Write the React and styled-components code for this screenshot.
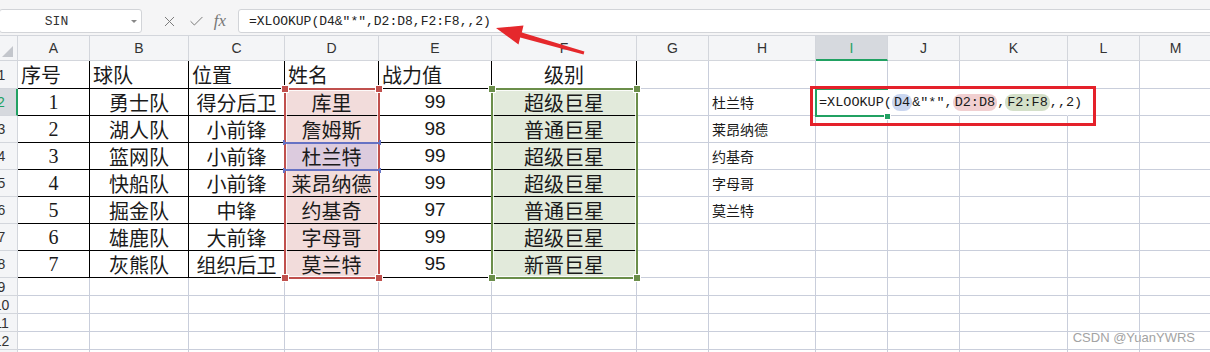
import styled, { createGlobalStyle } from 'styled-components';
import { X, Check } from 'lucide-react';

const GlobalStyle = createGlobalStyle`
  html, body { margin: 0; padding: 0; background: #fff; }
  body { font-family: "Liberation Sans", "Noto Sans CJK SC", sans-serif; }
`;

const COL_WIDTHS = [18, 72, 99, 96, 94, 113, 145, 72, 107, 72, 72, 108, 72, 72];
const ROW_HEIGHTS = [26, 28, 27, 27, 27, 27, 27, 27, 27, 18, 18, 18, 18, 18];
const LETTERS = ['A', 'B', 'C', 'D', 'E', 'F', 'G', 'H', 'I', 'J', 'K', 'L', 'M'];

const TABLE = [
  ['序号', '球队', '位置', '姓名', '战力值', '级别'],
  ['1', '勇士队', '得分后卫', '库里', '99', '超级巨星'],
  ['2', '湖人队', '小前锋', '詹姆斯', '98', '普通巨星'],
  ['3', '篮网队', '小前锋', '杜兰特', '99', '超级巨星'],
  ['4', '快船队', '小前锋', '莱昂纳德', '99', '超级巨星'],
  ['5', '掘金队', '中锋', '约基奇', '97', '普通巨星'],
  ['6', '雄鹿队', '大前锋', '字母哥', '99', '超级巨星'],
  ['7', '灰熊队', '组织后卫', '莫兰特', '95', '新晋巨星'],
];

const LOOKUPS = { 2: '杜兰特', 3: '莱昂纳德', 4: '约基奇', 5: '字母哥', 6: '莫兰特' };

const GREEN = '#21a162';
const GRID = '#c9cedb';
const HEAD_LINE = '#d3d6dc';

const Page = styled.div`
  position: relative;
  width: 1210px;
  height: 352px;
  overflow: hidden;
  background: #fff;
`;

const FormulaBar = styled.div`
  height: 35px;
  box-sizing: border-box;
  display: flex;
  align-items: flex-start;
  padding-top: 9px;
  background: #f5f5f6;
`;

const NameBox = styled.div`
  width: 143px;
  height: 24px;
  margin-left: -1px;
  box-sizing: border-box;
  display: flex;
  align-items: center;
  background: #fff;
  border: 1px solid #d2d4d8;
  border-radius: 3px;
  font: 13px "Liberation Mono", monospace;
  color: #333;
`;

const NameText = styled.span`
  flex: 1;
  text-align: center;
  padding-right: 18px;
`;

const Caret = styled.span`
  width: 0;
  height: 0;
  margin-right: 4px;
  border-left: 3px solid transparent;
  border-right: 3px solid transparent;
  border-top: 3px solid #888;
`;

const Tools = styled.div`
  display: flex;
  align-items: center;
  height: 24px;
  margin-left: 14px;
  color: #7a7a7a;
`;

const Tool = styled.span`
  width: ${p => p.$w}px;
  display: flex;
  justify-content: center;
  align-items: center;
`;

const Fx = styled.span`
  font: italic 17px "Liberation Serif", serif;
  color: #777;
`;

const FormulaInput = styled.div`
  flex: 1;
  height: 24px;
  margin-left: 8px;
  margin-right: -4px;
  box-sizing: border-box;
  display: flex;
  align-items: center;
  padding-left: 10px;
  background: #fff;
  border: 1px solid #d2d4d8;
  border-radius: 3px;
  font: 13px "Liberation Mono", monospace;
  color: #222;
  white-space: pre;
`;

const Sheet = styled.div`
  display: grid;
  grid-template-columns: ${COL_WIDTHS.map(w => `${w}px`).join(' ')};
  grid-template-rows: ${ROW_HEIGHTS.map(h => `${h}px`).join(' ')};
`;

const Placed = styled.div`
  grid-column: ${p => p.$c};
  grid-row: ${p => p.$r};
  box-sizing: border-box;
`;

const Corner = styled(Placed)`
  display: flex;
  align-items: flex-end;
  justify-content: flex-end;
  padding: 0 4px 3px 0;
  background: #f4f5f7;
  border-right: 1px solid ${HEAD_LINE};
  border-bottom: 1px solid ${HEAD_LINE};
  border-top: 1px solid ${HEAD_LINE};
  &::after {
    content: '';
    width: 0;
    height: 0;
    border-left: 11px solid transparent;
    border-bottom: 11px solid #c3c6cc;
  }
`;

const ColHead = styled(Placed)`
  display: flex;
  align-items: center;
  justify-content: center;
  background: ${p => (p.$active ? '#d6d9de' : '#f4f5f7')};
  color: ${p => (p.$active ? GREEN : '#333')};
  border-top: 1px solid ${HEAD_LINE};
  border-right: 1px solid ${HEAD_LINE};
  border-bottom: ${p => (p.$active ? `2px solid ${GREEN}` : `1px solid ${HEAD_LINE}`)};
  font: 14px "Liberation Sans", sans-serif;
`;

const RowHead = styled(Placed)`
  display: flex;
  align-items: center;
  justify-content: center;
  padding-right: 14px;
  overflow: hidden;
  background: ${p => (p.$active ? '#d6d9de' : '#f4f5f7')};
  color: ${p => (p.$active ? GREEN : '#333')};
  border-right: ${p => (p.$active ? `2px solid ${GREEN}` : `1px solid ${HEAD_LINE}`)};
  border-bottom: 1px solid ${HEAD_LINE};
  font: 14px "Liberation Sans", sans-serif;
`;

const FONTS = {
  cjk: '20px "Noto Sans CJK SC", sans-serif',
  serif: '20px "Liberation Serif", serif',
  sans: '19px "Liberation Sans", sans-serif',
  small: '14px "Noto Sans CJK SC", sans-serif',
  mono: '13.5px "Liberation Mono", monospace',
};

const Cell = styled(Placed)`
  display: flex;
  align-items: center;
  justify-content: ${p => (p.$align === 'left' ? 'flex-start' : 'center')};
  padding-left: ${p => (p.$align === 'left' ? '3px' : '0')};
  white-space: nowrap;
  position: relative;
  z-index: ${p => (p.$over ? 2 : 0)};
  background: ${p => p.$fill || 'transparent'};
  border-right: 1px solid ${p => (p.$hideRight ? 'transparent' : p.$dark ? '#000' : GRID)};
  border-bottom: 1px solid ${p => (p.$dark ? '#000' : GRID)};
  font: ${p => FONTS[p.$font]};
  color: #1a1a1a;
`;

const Ref = styled.span`
  background: ${p => p.$bg};
  border-radius: 8px;
  padding: 1px 2px;
`;

const RangeBox = styled(Placed)`
  margin: -1px;
  position: relative;
  z-index: 3;
  pointer-events: none;
  border: 2px solid ${p => p.$color};
  box-shadow: inset 0 0 0 1px rgba(255, 255, 255, 0.85);
`;

const Handle = styled.span`
  position: absolute;
  width: 6px;
  height: 6px;
  background: ${p => p.$color};
  border: 1px solid #fff;
  ${p => (p.$top ? 'top: -5px;' : 'bottom: -5px;')}
  ${p => (p.$left ? 'left: -5px;' : 'right: -5px;')}
`;

const CellMark = styled(Placed)`
  margin: -1px -2px;
  position: relative;
  z-index: 4;
  pointer-events: none;
  border-top: 2px solid #6672c4;
  border-bottom: 2px solid #6672c4;
  &::before,
  &::after {
    content: '';
    position: absolute;
    top: -4px;
    bottom: -4px;
    width: 2px;
    background: linear-gradient(#6672c4 0 5px, transparent 5px calc(100% - 5px), #6672c4 calc(100% - 5px));
  }
  &::before { left: 0; }
  &::after { right: 0; }
`;

const ActiveCell = styled(Placed)`
  margin: -1px 0 -1px -1px;
  position: relative;
  z-index: 3;
  pointer-events: none;
  border: 2px solid ${GREEN};
  border-right: none;
`;

const FillHandle = styled.span`
  position: absolute;
  right: -3px;
  bottom: -5px;
  width: 5px;
  height: 5px;
  background: ${GREEN};
  border: 1px solid #fff;
`;

const Callout = styled.div`
  position: absolute;
  left: 810px;
  top: 86px;
  width: 286px;
  height: 40px;
  box-sizing: border-box;
  border: 3px solid #e4212a;
  z-index: 6;
  pointer-events: none;
`;

const Arrow = styled.svg`
  position: absolute;
  left: 490px;
  top: 20px;
  z-index: 6;
  overflow: visible;
`;

const Watermark = styled.div`
  position: absolute;
  right: 15px;
  bottom: 7px;
  z-index: 6;
  font: 13px "Liberation Sans", sans-serif;
  color: #a3a3a3;
  text-shadow: 0 0 1px #fff;
`;

const PINK = '#f2dcdb';
const LILAC = '#dccbde';
const SAGE = '#e2eadb';

function cellProps(r, ci) {
  const inTable = r <= 8 && ci <= 5;
  const props = { $dark: inTable, $align: 'center', $font: 'cjk' };
  let content = null;
  if (inTable) {
    content = TABLE[r - 1][ci];
    if (r === 1) props.$align = ci === 5 ? 'center' : 'left';
    else if (ci === 0) props.$font = 'serif';
    else if (ci === 4) props.$font = 'sans';
  }
  if (ci === 3 && r >= 2 && r <= 8) props.$fill = r === 4 ? LILAC : PINK;
  if (ci === 5 && r >= 2 && r <= 8) props.$fill = SAGE;
  if (ci === 7 && LOOKUPS[r]) {
    content = LOOKUPS[r];
    props.$align = 'left';
    props.$font = 'small';
  }
  if (r === 2 && ci >= 8 && ci <= 10) props.$hideRight = true;
  if (r === 2 && ci === 8) {
    props.$align = 'left';
    props.$font = 'mono';
    props.$over = true;
    content = (
      <span>
        =XLOOKUP(<Ref $bg="#cad6f0">D4</Ref>&amp;"*",<Ref $bg="#f1cfd0">D2:D8</Ref>,
        <Ref $bg="#d4e0c9">F2:F8</Ref>,,2)
      </span>
    );
  }
  return { props, content };
}

const SHEET_ROWS = Array.from({ length: 13 }, (_, i) => i + 1);

export default function App() {
  return (
    <Page>
      <GlobalStyle />
      <FormulaBar>
        <NameBox>
          <NameText>SIN</NameText>
          <Caret />
        </NameBox>
        <Tools>
          <Tool $w={27}><X size={17} strokeWidth={1.4} /></Tool>
          <Tool $w={27}><Check size={17} strokeWidth={1.4} /></Tool>
          <Tool $w={20}><Fx>fx</Fx></Tool>
        </Tools>
        <FormulaInput>=XLOOKUP(D4&amp;"*",D2:D8,F2:F8,,2)</FormulaInput>
      </FormulaBar>

      <Sheet>
        <Corner $r={1} $c={1} />
        {LETTERS.map((l, ci) => (
          <ColHead key={l} $r={1} $c={ci + 2} $active={l === 'I'}>{l}</ColHead>
        ))}
        {SHEET_ROWS.map(r => [
          <RowHead key={`h${r}`} $r={r + 1} $c={1} $active={r === 2}>{r}</RowHead>,
          ...LETTERS.map((l, ci) => {
            const { props, content } = cellProps(r, ci);
            return (
              <Cell key={`${l}${r}`} $r={r + 1} $c={ci + 2} {...props}>{content}</Cell>
            );
          }),
        ])}

        <RangeBox $c="5" $r="3 / 10" $color="#c0504d">
          <Handle $color="#c0504d" $top $left />
          <Handle $color="#c0504d" $top />
          <Handle $color="#c0504d" $left />
          <Handle $color="#c0504d" />
        </RangeBox>
        <CellMark $c="5" $r="5" />
        <RangeBox $c="7" $r="3 / 10" $color="#6b8e4a">
          <Handle $color="#6b8e4a" $top $left />
          <Handle $color="#6b8e4a" $top />
          <Handle $color="#6b8e4a" $left />
          <Handle $color="#6b8e4a" />
        </RangeBox>
        <ActiveCell $c="10" $r="3">
          <FillHandle />
        </ActiveCell>
      </Sheet>

      <Callout />
      <Arrow width="100" height="40" viewBox="490 20 100 40">
        <polygon
          fill="#e5282c"
          points="496,28 523.5,25.6 521.8,32.4 584.4,51.6 583.6,54.4 520.2,37.6 518.5,44.6"
        />
      </Arrow>
      <Watermark>CSDN @YuanYWRS</Watermark>
    </Page>
  );
}
